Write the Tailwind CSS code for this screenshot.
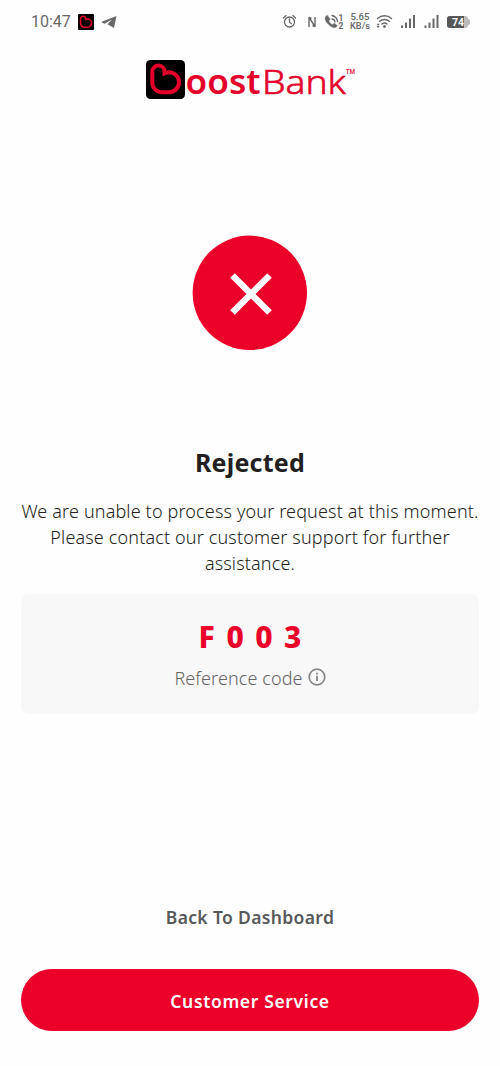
<!DOCTYPE html>
<html lang="en">
<head>
<meta charset="utf-8">
<title>Boost Bank</title>
<script src="https://cdn.jsdelivr.net/npm/@tailwindcss/browser@4"></script>
</head>
<body class="bg-[#fefefe]">
<div class="w-[500px] h-[1066px] flex flex-col items-center overflow-hidden font-['Noto_Sans',sans-serif] text-[#231f20]">
  <header class="w-full h-[44px] shrink-0 flex items-center text-[#686868]">
    <span class="ml-[31px] w-[47px] text-[16px] leading-none font-['Roboto',sans-serif]">10:47</span>
    <svg class="w-[16px] h-[16px]" viewBox="146 60 39 39"><rect x="146" y="60" width="39" height="39" rx="2" fill="#000"/><path d="M152.300 71.700a6.100 6.100 0 0 1 12.200 0v1.500q2-1 4.500-1a9.800 9.800 0 0 1 0 20h-7.200a9.500 9.500 0 0 1-9.500-9.500Z" fill="none" stroke="#dc0a28" stroke-width="4"/></svg>
    <svg class="ml-[7px] w-[16px] h-[14px]" viewBox="0 0 16 14"><path d="M15.500 1 0 7l3.500 1.700L11 4.500 6.500 9.200 13 13Z" fill="#686868"/></svg>
    <svg class="ml-[165px] w-[190px] h-[24px]" viewBox="282 10 190 24" fill="none" stroke="#686868" stroke-linecap="round" stroke-linejoin="round">
      <g stroke-width="1.300"><circle cx="289.500" cy="22" r="5"/><path d="M289.500 19v3.200l2 1.500M283.500 18l2.600-2.400M295.500 18l-2.600-2.400"/></g>
      <path d="M309 27V17.500l6 9V17M309 17.500l2.500 1M315 26.500l-2.500-1" stroke-width="1.400" stroke-linecap="butt"/>
      <path d="M327 15.200c-3 2-2 5 0 7.500s5 5 7.500 5c1.500 0 2.500-1.300 2.700-2.200l-2.900-2.200-2 1.400c-1.600-.8-2.700-2-3.500-3.600l1.400-1.900Z" fill="#686868" stroke-width=".4"/>
      <path d="M332 19a3.500 3.500 0 0 1 3 3M332 15.500a7 7 0 0 1 5.500 6" stroke-width="1.300"/>
      <g fill="#686868" stroke="none" font-family="Roboto, sans-serif">
        <text x="338.500" y="20.500" font-size="8.500" font-weight="700">1</text>
        <text x="338.500" y="28.500" font-size="8.500" font-weight="700">2</text>
        <text x="350.500" y="20" font-size="9" font-weight="500" textLength="19" lengthAdjust="spacingAndGlyphs">5.65</text>
        <text x="350" y="29" font-size="9" font-weight="500" textLength="20" lengthAdjust="spacingAndGlyphs">KB/s</text>
        <circle cx="384.500" cy="26.500" r="1.400"/>
        <path d="M376.500 25.300l1.600-2 1.600 2ZM376.500 26l1.600 2 1.600-2Z"/>
        <rect x="401" y="25.500" width="2" height="2.500"/><rect x="405" y="22.500" width="2" height="5.500"/><rect x="409" y="18.500" width="2" height="9.500"/><rect x="413" y="15" width="2" height="13"/>
        <rect x="424.500" y="25.500" width="2" height="2.500"/><rect x="428.500" y="22.500" width="2" height="5.500"/><rect x="432.500" y="18.500" width="2" height="9.500"/><rect x="436.500" y="15" width="2" height="13"/>
      </g>
      <path d="M377.500 18.500a10.500 10.500 0 0 1 14 0M379.700 21.300a7 7 0 0 1 9.600 0M382 24a4 4 0 0 1 5 0" stroke-width="1.500"/>
      <rect x="447" y="16" width="21" height="12" rx="3" fill="#bcbcbc" stroke="none"/><rect x="467" y="19" width="3" height="6" rx="1.500" fill="#bcbcbc" stroke="none"/>
      <path d="M450 16h14v12h-14a3 3 0 0 1-3-3v-6a3 3 0 0 1 3-3Z" fill="#585858" stroke="none"/>
      <text x="452" y="26" font-size="10.500" font-weight="700" font-family="Roboto, sans-serif" fill="#fff" stroke="none" textLength="12">74</text>
    </svg>
  </header>
  <svg class="mt-[6px] w-[230px] h-[60px] shrink-0" viewBox="135 50 230 60" font-family="'Noto Sans', sans-serif" fill="#e4002b">
    <rect x="146" y="60" width="39" height="39" rx="4.500" fill="#000"/>
    <path d="M152.300 71.700a6.100 6.100 0 0 1 12.200 0v1.500q2-1 4.500-1a9.800 9.800 0 0 1 0 20h-7.200a9.500 9.500 0 0 1-9.500-9.500Z" fill="none" stroke="#e4002b" stroke-width="4"/>
    <text x="185.500" y="94" font-size="34.500" font-weight="600" textLength="75" lengthAdjust="spacingAndGlyphs">oost</text>
    <text x="262" y="94" font-size="33.500" font-weight="300" stroke="#e4002b" stroke-width=".6" textLength="84" lengthAdjust="spacingAndGlyphs">Bank</text>
    <text x="346" y="74" font-size="6.500" font-weight="600" textLength="9" lengthAdjust="spacingAndGlyphs">TM</text>
  </svg>
  <svg class="mt-[125px] w-[116px] h-[116px] shrink-0" viewBox="192 235 116 116"><circle cx="249.800" cy="292.800" r="57.200" fill="#eb0029"/><path d="m232.500 275.500 37 37M269.500 275.500l-37 37" stroke="#fff" stroke-width="6.500"/></svg>
  <h1 class="mt-[93px] h-[36px] leading-[36px] text-[25px] font-bold whitespace-nowrap tracking-[0.250px]">Rejected</h1>
  <div class="mt-[18px] h-[78px] text-[18px] leading-[26px] font-light text-center whitespace-nowrap tracking-[0.150px]">
    <p>We are unable to process your request at this moment.</p>
    <p>Please contact our customer support for further</p>
    <p>assistance.</p>
  </div>
  <section class="mt-[18px] w-[458px] h-[120px] shrink-0 rounded-[8px] bg-[#f8f8f8] flex flex-col items-center">
    <p class="mt-[23px] h-[40px] leading-[40px] text-[30px] font-extrabold text-[#eb0029] tracking-[11.500px] mr-[-11.500px]">F003</p>
    <div class="mt-[7px] h-[28px] flex items-center gap-[5px] text-[#666]">
      <span class="text-[18px] leading-[28px] font-light whitespace-nowrap tracking-[0.100px]">Reference code</span>
      <svg class="w-[18px] h-[18px] mt-[-3px]" viewBox="0 0 18 18" fill="none" stroke="#858585"><circle cx="9" cy="9" r="7.800" stroke-width="1.700"/><path d="M9 7.800V13M9 4.800v1.800" stroke-width="1.800"/></svg>
    </div>
  </section>
  <button class="mt-[188px] h-[30px] leading-[30px] text-[17.500px] font-semibold text-[#58595b] whitespace-nowrap tracking-[0.350px]">Back To Dashboard</button>
  <button class="mt-[37px] w-[458px] h-[62px] shrink-0 rounded-full bg-[#eb0029] text-white text-[17.500px] font-semibold whitespace-nowrap pt-[2px] tracking-[0.650px]">Customer Service</button>
</div>
</body>
</html>
